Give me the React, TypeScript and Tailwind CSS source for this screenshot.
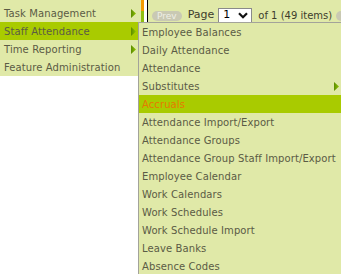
const mainItems = [
  { label: "Task Management", sub: true },
  { label: "Staff Attendance", sub: true, active: true },
  { label: "Time Reporting", sub: true },
  { label: "Feature Administration", sub: false },
];

const subItems = [
  { label: "Employee Balances" },
  { label: "Daily Attendance" },
  { label: "Attendance" },
  { label: "Substitutes", sub: true },
  { label: "Accruals", active: true },
  { label: "Attendance Import/Export" },
  { label: "Attendance Groups" },
  { label: "Attendance Group Staff Import/Export" },
  { label: "Employee Calendar" },
  { label: "Work Calendars" },
  { label: "Work Schedules" },
  { label: "Work Schedule Import" },
  { label: "Leave Banks" },
  { label: "Absence Codes" },
];

function Arrow() {
  return (
    <svg width="5" height="9" viewBox="0 0 5 9" className="shrink-0">
      <defs>
        <linearGradient id="arw" x1="0" y1="0" x2="1" y2="0">
          <stop offset="0" stopColor="#5c8c00" />
          <stop offset="1" stopColor="#8fc400" />
        </linearGradient>
      </defs>
      <path d="M0 0 L5 4.5 L0 9 Z" fill="url(#arw)" />
    </svg>
  );
}

export default function App() {
  return (
    <div className="relative flex w-[341px] h-[274px] overflow-hidden bg-white font-['DejaVu_Sans',Verdana,sans-serif] text-[10px] tracking-[0.1px] text-[#5b5b45]">
      {/* left menu */}
      <div className="w-[138px] shrink-0 flex flex-col">
        <div className="bg-[#e0e9a8] pt-[4px]">
          {mainItems.map((m) => (
            <div
              key={m.label}
              className={`h-[18px] flex items-center justify-between pl-[4px] pr-[2px] ${m.active ? "bg-[#a9cb00]" : ""}`}
            >
              <span>{m.label}</span>
              {m.sub && <Arrow />}
            </div>
          ))}
        </div>
      </div>

      {/* frame strip */}
      <div className="flex h-[22px] shrink-0">
        <div className="w-[3px] bg-[#e0e9a8]"></div>
        <div className="w-[3px] flex flex-col">
          <div className="h-[11px] bg-[#f39a00]"></div>
          <div className="h-[11px] bg-[#8fbf10]"></div>
        </div>
        <div className="w-[3px] bg-white"></div>
        <div className="w-px bg-black"></div>
      </div>

      {/* page toolbar */}
      <div className="flex-1 min-w-0 bg-[#e0e9a8]">
        <div className="flex items-center h-[31px] pl-[4px] gap-[3px] whitespace-nowrap tracking-normal">
          <span className="h-[10px] px-[5px] rounded-full bg-[#c9c9b3] text-[#efefe6] text-[9px] leading-[10px]">Prev</span>
          <span className="text-[11px] text-[#3d3d2c] ml-[3px]">Page</span>
          <div className="ml-[1px] w-[34px] h-[15px] shrink-0 bg-white border border-[#8a8a8a] flex items-center justify-between pl-[4px] pr-[3px] text-[11px] text-black">
            <span>1</span>
            <svg width="10" height="7" viewBox="0 0 10 7">
              <path d="M1 1.2 L5 5.2 L9 1.2" fill="none" stroke="#111" strokeWidth="2.2" />
            </svg>
          </div>
          <span className="ml-[3px] text-[10px] text-[#3d3d2c]">of 1 (49 items)</span>
          <span className="ml-[1px] h-[10px] px-[5px] rounded-full bg-[#c9c9b3] text-[#efefe6] text-[9px] leading-[10px]">Next</span>
        </div>
      </div>

      {/* flyout submenu */}
      <div className="absolute left-[138px] top-[22px] w-[205px] bg-[#e0e9a8] border-l border-t border-[#a3a39a]">
        {subItems.map((s) => (
          <div
            key={s.label}
            className={`h-[18px] flex items-center justify-between pl-[3px] pr-[4px] ${s.active ? "bg-[#a9cb00] text-[#e57a00]" : ""}`}
          >
            <span>{s.label}</span>
            {s.sub && <Arrow />}
          </div>
        ))}
      </div>
    </div>
  );
}
